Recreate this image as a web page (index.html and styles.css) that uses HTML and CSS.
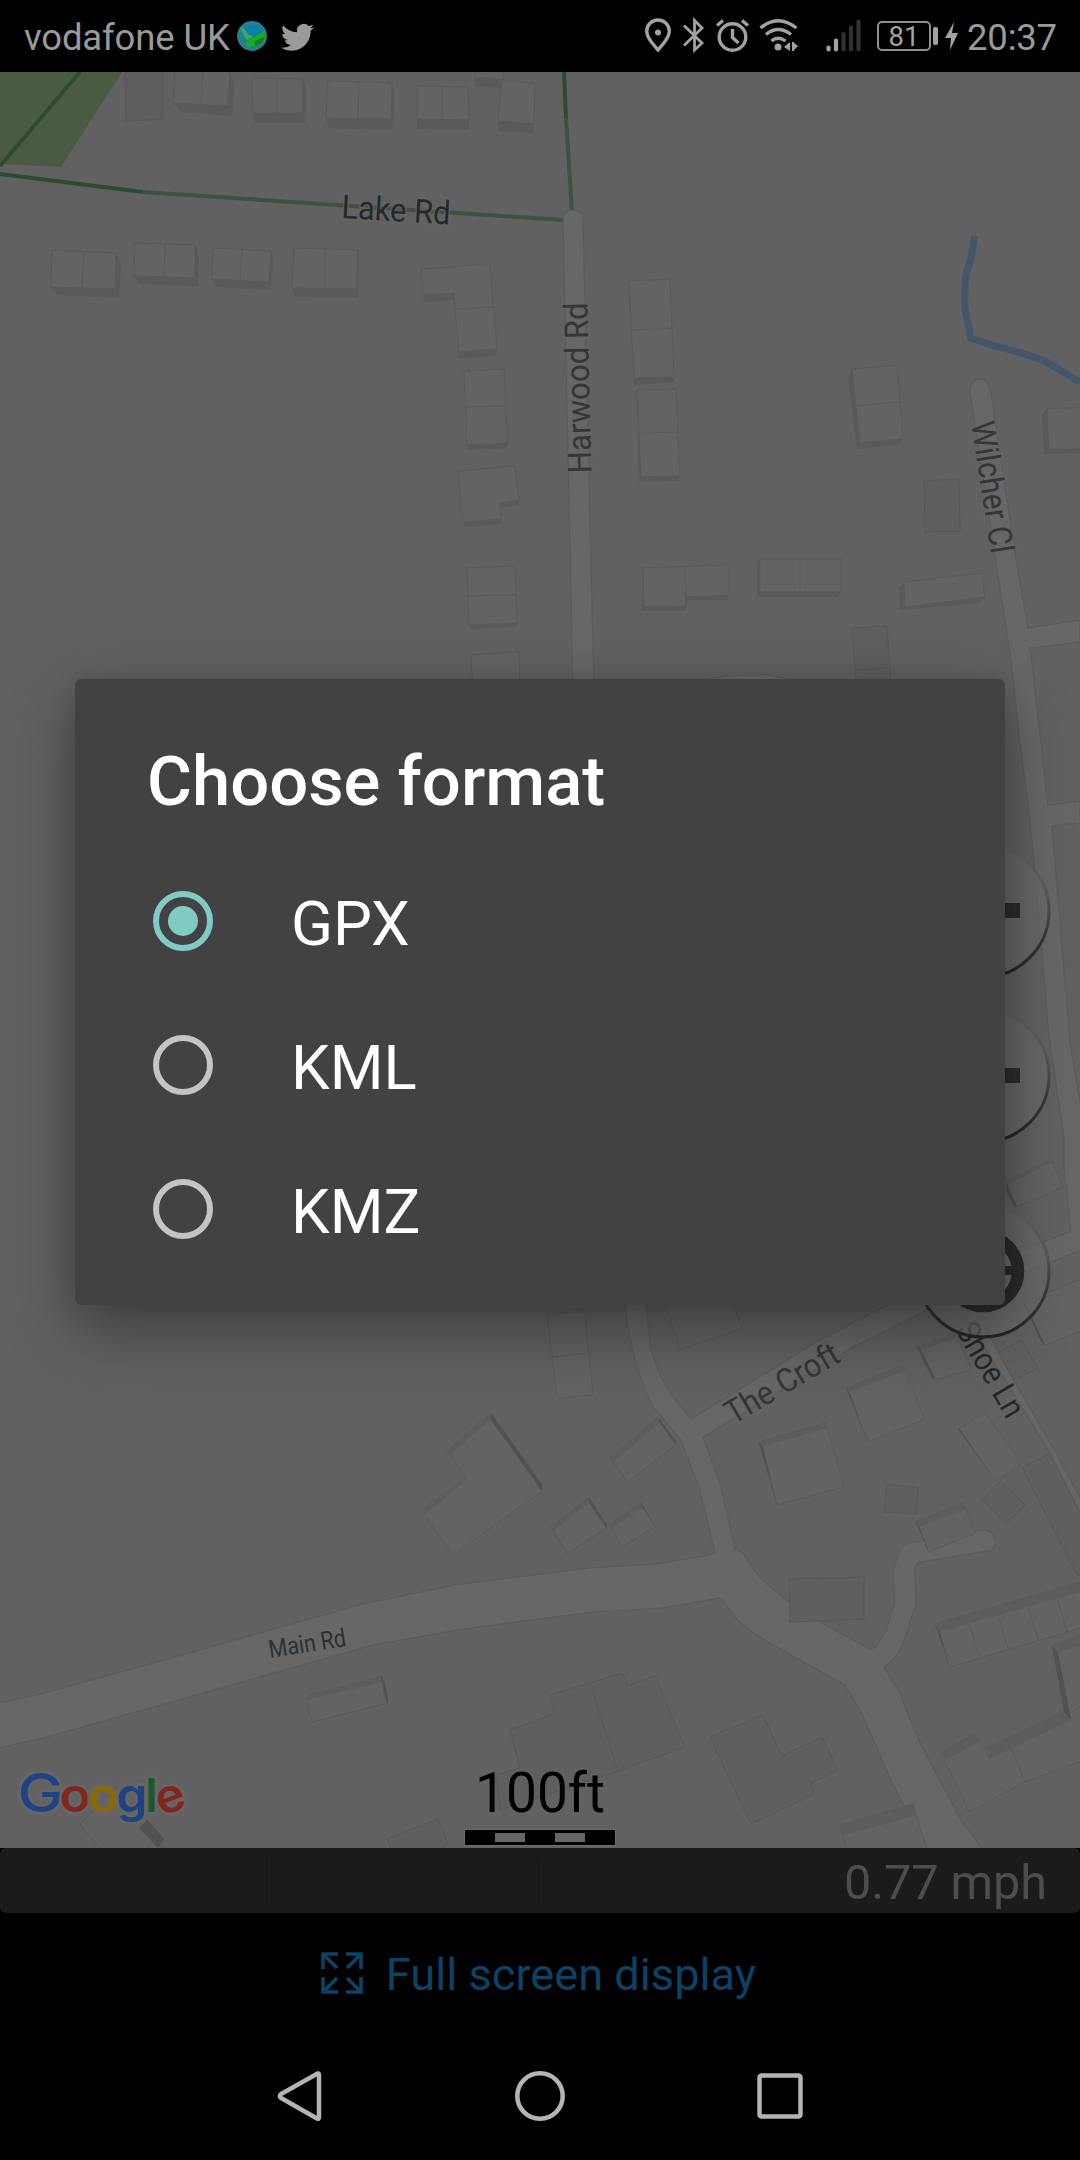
FILE: index.html
```html
<!DOCTYPE html>
<html lang="en">
<head>
<meta charset="utf-8">
<title>Choose format</title>
<link rel="stylesheet" href="styles.css">
</head>
<body>
<div class="phone">
  <header class="status">
    <span class="carrier">vodafone UK</span>
    <svg class="globe" width="32" height="32" viewBox="0 0 32 32">
      <circle cx="16" cy="16" r="15" fill="#23808c"/>
      <path d="M9 6L24 5L28 10.700L18 17.500L12 14Z" fill="#0b80a8"/>
      <path d="M4 8L7 7.300L13 15L17 16L12 21L9 18Z" fill="#3aa56c"/>
      <path d="M12 19L18.700 17.300L28 10.700L29.400 17L18.700 26.500L10 26L11 21Z" fill="#1bac1b"/>
      <path d="M19 21L29 16.500L26 23L18.700 26.500Z" fill="#14801f"/>
    </svg>
    <svg class="bird" width="33" height="30" viewBox="0 1.5 24 20.5"><path fill="#9a9a9a" d="M23.95 4.57a10 10 0 01-2.82.77 4.96 4.96 0 002.16-2.72c-.95.55-2 .96-3.13 1.18a4.92 4.92 0 00-8.38 4.48C7.69 8.1 4.07 6.13 1.64 3.16a4.92 4.92 0 001.52 6.57 4.9 4.9 0 01-2.23-.61v.06a4.92 4.92 0 003.95 4.83 5 5 0 01-2.21.08 4.94 4.94 0 004.6 3.42A9.87 9.87 0 010 19.54a14 14 0 007.55 2.21c9.05 0 14-7.5 14-13.98 0-.21 0-.42-.02-.63a9.94 9.94 0 002.46-2.55z"/></svg>
    <div class="indicators">
      <svg width="160" height="40" viewBox="644 17 160 40" fill="none" stroke="#a2a2a2" stroke-width="3.4">
        <path d="M658 51C652 44 646.700 38 646.700 32A11.300 11 0 0 1 669.300 32C669.300 38 664 44 658 51Z"/>
        <circle cx="658" cy="33.500" r="3" fill="#a2a2a2" stroke="none"/>
        <path stroke-width="2.800" d="M684 26.500L702 44L694.500 51V21.500L702 29L684 46.500"/>
        <circle cx="732.500" cy="38" r="13.300"/>
        <path d="M732.500 30V38.500L738.500 44M717 26.500L723 21.500M748 26.500L742 21.500"/>
        <path d="M760.500 29Q778 14.500 796.500 29M766 35.500Q778 25.500 791 35.500M771.500 42Q778 36.500 785.500 42"/>
        <circle cx="778" cy="48" r="3.500" fill="#a2a2a2" stroke="none"/>
        <path fill="#a2a2a2" stroke="none" d="M784 48L790 43V52ZM798 47L793 52V43ZM792 43h2v9h-2z"/>
      </svg>
      <svg class="signal" width="37" height="36" viewBox="825 18 37 36" stroke-width="4.200" stroke-linecap="round">
        <path stroke="#a2a2a2" d="M828.500 47.500V49.500M836 40.500V49.500"/>
        <path stroke="#313131" d="M843.500 34V49.500M851 27.500V49.500M858.500 21.500V49.500"/>
      </svg>
      <span class="battery">81</span>
      <i class="tip"></i>
      <svg class="bolt" width="14" height="28" viewBox="0 0 14 28"><path fill="#a2a2a2" d="M9 0L0 16H6L5 28L13 11H7Z"/></svg>
      <span class="time">20:37</span>
    </div>
  </header>

  <main class="map">
    <svg class="tiles" viewBox="0 72 1080 1776" width="1080" height="1776">
      <defs>
        <linearGradient id="ring" x1="0" y1="0" x2="0" y2="1">
          <stop offset="0" stop-color="#333" stop-opacity="0"/>
          <stop offset=".25" stop-color="#444" stop-opacity=".25"/>
          <stop offset=".65" stop-color="#303030" stop-opacity=".8"/>
          <stop offset="1" stop-color="#242424"/>
        </linearGradient>
      </defs>
      <path fill="#4a5b42" d="M0 72H122L61 167L5 164H0Z"/>
      <g fill="none" stroke="#2c4c31" stroke-width="4">
        <path d="M80 72L0 166M0 174L143 192M564 72L566 118"/>
        <path stroke="#3d523f" d="M143 192L563 220M566 118L572 212"/>
      </g>
      <path class="creek" d="M975 236L971 258L966 275Q964 290 965 309L971 338L995 346Q1022 352 1045 361L1080 382"/>

      <g class="plain">
        <path d="M125 71H163V119L126 121Z"/>
        <path d="M924 481L959 479L960 531L925 532Z"/>
        <path d="M852 628L887 626L891 684H856ZM855 670L890 668"/>
      </g>

      <g class="road">
        <path d="M563 220Q564 210 573 210T583 220L594 690L646 1305L650 1342Q654 1367 670 1393L691 1419L820 1340L884 1307L1071 1231L1064 1168V1137L1049 1037L1034 862L1029 812L1019 735L1011 660L970 393Q969 380 980 379Q989 380 991 392L1016 560L1028 628L1080 620V642L1030 648L1032 662L1048 805L1080 801V823L1052 826L1070 1043L1084 1125V1249L1053 1261L927 1310L853 1347L703 1437L721 1487L735 1549L741 1552Q747 1556 752 1567Q758 1578 790 1603L820 1622L870 1649L876 1647L887 1628L895 1603L893 1573L897 1557Q902 1545 909 1543L983 1530C1000 1532 998 1551 987 1551L920 1562Q914 1564 915 1573L916 1603L905 1638Q900 1655 892 1660L884 1667L900 1693Q914 1733 929 1760L959 1817L983 1850H927L891 1780L862 1714L845 1685L766 1641Q738 1624 733 1613L720 1598L661 1608L592 1612L463 1629L373 1645L47 1737L-2 1748V1703L41 1694L157 1662L359 1605L454 1585L590 1568L657 1564L704 1556L715 1553L700 1490L681 1440L653 1407Q632 1365 625 1305L573 690Z"/>
        <path d="M960 1308L1005 1380L1050 1453L1084 1522V1506L1056 1453L1009 1372L975 1308Z"/>
        <path d="M690 682L728 676L770 675L800 682Z"/>
      </g>

      <g class="wall">
        <path d="M173 103L228 106L230 72L234 85L232 116L181 112Z"/>
        <path d="M253 113H303V79L306 86L305 123H255Z"/>
        <path d="M326 118L391 119L392 83L394 90L393 130L329 128Z"/>
        <path d="M417 119L469 120V130L417 129ZM475 72H501V88L475 86Z"/>
        <path d="M498 121L534 124L533 133L498 131Z"/>
        <path d="M51 287L115 289L116 253L121 264L119 298L57 295Z"/>
        <path d="M134 276L195 278V245L199 257L198 286L139 284Z"/>
        <path d="M212 279L269 282L271 251L273 259L271 290L216 287Z"/>
        <path d="M292 288L356 289L358 250L359 263L358 298L296 297Z"/>
        <path d="M423 295L454 293V300L424 302ZM459 352L497 349L496 356L459 358Z"/>
        <path d="M467 445L507 443V448L468 450ZM463 522L501 519L502 524L464 527ZM500 503L519 500V505L500 508Z"/>
        <path d="M469 625L517 623V627L470 629Z"/>
        <path d="M634 378L674 377V382L634 385L629 282L631 283ZM641 477L680 476L679 479L678 481L639 482L637 392Z"/>
        <path d="M852 369L848 378L857 449L900 444L903 439L860 443Z"/>
        <path d="M643 568L642 611L685 611L688 600L727 600L729 595L686 597V606H644Z"/>
        <path d="M760 559L757 565V597H837L841 592H760Z"/>
        <path d="M904 582L899 587L900 610L980 603L985 597L905 607Z"/>
        <path d="M1047 409L1042 415L1044 454L1080 453V449H1049Z"/>
      </g>
      <g class="roof">
        <path d="M175 71H230L228 106L173 103ZM203 72L201 104"/>
        <path d="M252 78L303 79V113H253ZM277 78V113"/>
        <path d="M328 81L392 83L391 119L326 118ZM359 82L358 119"/>
        <path d="M417 86L468 87L469 120L417 119ZM442 87V120"/>
        <path d="M475 71H503V80L475 77ZM502 80L535 83L534 124L498 121Z"/>
        <path d="M52 250L116 253L115 289L51 287ZM84 252L82 288"/>
        <path d="M135 243L195 245V278L134 276ZM165 244L164 277"/>
        <path d="M213 248L271 251L269 282L212 279ZM242 250L240 281"/>
        <path d="M294 248L358 250L356 289L292 288ZM325 249V288"/>
        <path d="M421 269L490 264L493 307L455 309L454 293L423 295Z"/>
        <path d="M455 309L494 307L497 349L459 352Z"/>
        <path d="M464 371L504 369L507 443L467 445ZM466 407L506 406"/>
        <path d="M458 471L515 466L519 500L500 503L501 519L463 522Z"/>
        <path d="M467 568L515 566L517 623L469 625ZM468 596L516 595"/>
        <path d="M471 655L519 652L520 690H473Z"/>
        <path d="M629 281L670 279L674 377L634 378ZM631 330L672 328"/>
        <path d="M637 390L676 389L680 476L641 477ZM638 433L678 432"/>
        <path d="M852 369L897 365L903 439L860 443ZM856 406L900 402"/>
        <path d="M643 568L729 565V595L686 597V606L644 607ZM685 566L686 597"/>
        <path d="M760 559H841V592H760ZM800 559V592"/>
        <path d="M904 582L982 573L985 597L905 607Z"/>
        <path d="M1047 409L1084 407V449H1049Z"/>
      </g>

      <g class="plain low">
        <path d="M789 1579L864 1577V1619L790 1622Z"/>
        <path d="M887 1485L918 1487L917 1514L884 1512Z"/>
        <path d="M982 1499L1000 1481L1025 1505L1006 1523Z"/>
        <path d="M998 1353L1021 1340L1038 1368L1015 1380Z"/>
        <path d="M1022 1467L1050 1454L1084 1520V1575H1077Z"/>
        <path d="M550 1695L622 1673L628 1686L655 1676L685 1747L618 1771L500 1810L496 1775L520 1768L510 1730L554 1714ZM590 1683L618 1771"/>
        <path d="M710 1737L763 1715L782 1756L822 1737L838 1770L811 1783L814 1794L751 1824Z"/>
        <path d="M387 1839L438 1819L448 1844L438 1850H392Z"/>
      </g>
      <g class="slab">
        <path d="M547 1312L584 1308L593 1395L557 1398ZM552 1357L588 1353"/>
        <path d="M667 1308L672 1300H732L742 1329L680 1349Z"/>
        <path d="M491 1413L542 1491L453 1555L421 1511L466 1477L447 1451Z"/>
        <path d="M610 1458L658 1417L676 1445L628 1482Z"/>
        <path d="M551 1527L589 1497L607 1528L567 1553Z"/>
        <path d="M609 1525L641 1503L655 1527L622 1547Z"/>
        <path d="M759 1442L826 1423L844 1487L777 1505Z"/>
        <path d="M846 1388L902 1366L925 1419L868 1442Z"/>
        <path d="M917 1347L956 1333L971 1370L933 1380Z"/>
        <path d="M958 1429L985 1413L1022 1463L996 1481Z"/>
        <path d="M916 1522L963 1503L976 1533L929 1552Z"/>
        <path d="M935 1624L1084 1581V1627L950 1667ZM969 1623L979 1657M998 1615L1008 1648M1028 1607L1038 1640M1057 1597L1067 1632"/>
        <path d="M1052 1646L1084 1634V1714L1071 1720Z"/>
        <path d="M941 1753L976 1733L989 1759L1084 1705V1760L1025 1782L969 1812ZM1011 1748L1025 1782"/>
        <path d="M840 1825L913 1804L927 1850H847Z"/>
        <path d="M306 1700L382 1676L388 1703L312 1722Z"/>
        <path d="M80 1824L116 1787L164 1839L160 1850H101Z"/>
        <path d="M1006 1181L1052 1161L1063 1187L1017 1207Z"/>
        <path d="M1023 1302L1084 1278V1330L1045 1345Z"/>
      </g>
      <g fill="#5c5c5c">
        <path d="M547 1312L584 1308V1312L548 1316ZM447 1451L491 1413V1419L449 1456ZM421 1511L466 1477L464 1482L423 1516ZM610 1458L658 1417L659 1423L612 1463Z"/>
        <path d="M551 1527L589 1497V1503L553 1531ZM609 1525L641 1503L642 1507L611 1529ZM759 1442L826 1423L828 1428L761 1446ZM846 1388L902 1366L907 1370L848 1392Z"/>
        <path d="M917 1347L956 1333L958 1337L919 1351ZM916 1522L963 1503L967 1508L919 1527ZM935 1624L1080 1582V1592L938 1632ZM1052 1646L1080 1635V1646L1058 1652Z"/>
        <path d="M941 1753L976 1733L980 1741L944 1761ZM987 1747L1064 1711L1071 1720L989 1759ZM840 1825L913 1804L917 1815L844 1835ZM306 1700L310 1694L383 1676V1682Z"/>
        <path d="M1006 1181L1048 1160L1052 1162L1008 1185Z"/>
      </g>
      <g fill="#515151">
        <path d="M491 1413L542 1484V1491L491 1420ZM658 1417L676 1441V1445L659 1422ZM589 1497L607 1525V1529L589 1503ZM641 1502L655 1527L642 1507Z"/>
        <path d="M759 1442L777 1505L763 1446ZM846 1388L868 1442L850 1393ZM917 1347L919 1346L935 1377L933 1380ZM958 1429L996 1481L960 1429ZM916 1522L929 1552L920 1528Z"/>
        <path d="M935 1624L950 1667L940 1632ZM1052 1646L1058 1652L1071 1720L1064 1712ZM382 1676L388 1698V1703L382 1682ZM139 1828L147 1820L164 1839L158 1848Z"/>
        <path d="M1006 1181L1017 1207H1014L1006 1190ZM1023 1302L1027 1306L1045 1345L1041 1342ZM381 1676L385 1683L388 1704L384 1695Z"/>
      </g>

      <g class="label">
        <text class="dark" transform="translate(341 218) rotate(3.400)" textLength="109" lengthAdjust="spacingAndGlyphs">Lake Rd</text>
        <text transform="translate(591.500 473) rotate(-91.400)" textLength="171" lengthAdjust="spacingAndGlyphs">Harwood Rd</text>
        <text transform="translate(971 423) rotate(81.300)" textLength="133" lengthAdjust="spacingAndGlyphs">Wilcher Cl</text>
        <text transform="translate(733 1425) rotate(-30.500)" textLength="127" lengthAdjust="spacingAndGlyphs">The Croft</text>
        <text class="dark" transform="translate(955 1330) rotate(60)" textLength="104" lengthAdjust="spacingAndGlyphs">Shoe Ln</text>
        <text class="main" transform="translate(270 1658) rotate(-9)" textLength="78" lengthAdjust="spacingAndGlyphs">Main Rd</text>
      </g>

      <g stroke="url(#ring)" stroke-width="3" fill="#686868" fill-opacity=".65">
        <circle cx="983" cy="911" r="66"/>
        <circle cx="983" cy="1076" r="66"/>
        <circle cx="983" cy="1271" r="66"/>
      </g>
      <path fill="#2c2c2c" d="M946 903H1020V918H946ZM946 1068H1020V1083H946Z"/>
      <circle cx="983" cy="1271" r="35" fill="none" stroke="#2a2a2a" stroke-width="12.500"/>
      <path stroke="#2a2a2a" stroke-width="9" d="M950 1270.500H1016M983 1238V1304"/>

      <g class="google">
        <text class="cap" x="17.600" y="1812" fill="#1f4280" textLength="46" lengthAdjust="spacingAndGlyphs">G</text>
        <text x="59.500" y="1812" fill="#82251d" textLength="31" lengthAdjust="spacingAndGlyphs">o</text>
        <text x="88" y="1812" fill="#8a6a05" textLength="31" lengthAdjust="spacingAndGlyphs">o</text>
        <text x="116.500" y="1812" fill="#1f4280" textLength="31" lengthAdjust="spacingAndGlyphs">g</text>
        <text x="145.200" y="1812" fill="#1b592b">l</text>
        <text x="156" y="1812" fill="#82251d" textLength="29" lengthAdjust="spacingAndGlyphs" transform="rotate(-20 170.500 1799)">e</text>
      </g>
      <text class="scale" x="540" y="1812" textLength="130" lengthAdjust="spacingAndGlyphs">100ft</text>
      <path stroke="#6d6d6d" d="M464.500 1829.500H615.500V1845.500H464.500Z"/>
      <path fill="#666" d="M495 1833H525V1842H495ZM555 1833H585V1842H555Z"/>
    </svg>
  </main>

  <div class="readouts"><span></span><span></span><span></span><span class="speed">0.77 mph</span></div>

  <div class="fullscreen">
    <svg width="42" height="42" viewBox="0 0 42 42" fill="none" stroke="#0b4266" stroke-width="3.600">
      <path d="M2 17V2H17M2 2L16 16M25 2H40V17M40 2L26 16M2 25V40H17M2 40L16 26M25 40H40V25M40 40L26 26"/>
    </svg>
    <span>Full screen display</span>
  </div>

  <nav class="keys">
    <svg width="50" height="54" viewBox="275 2069 50 54"><path d="M317.500 2073.500Q319 2073 319 2075V2117Q319 2119.500 317 2118.500L281 2098Q279 2096 281 2094Z"/></svg>
    <svg width="54" height="54" viewBox="0 0 54 54"><circle cx="27" cy="27" r="22.700"/></svg>
    <svg width="50" height="50" viewBox="0 0 50 50"><rect x="4.500" y="4.500" width="41" height="41" rx="2"/></svg>
  </nav>

  <section class="dialog">
    <h1>Choose format</h1>
    <label class="option on"><i></i><span>GPX</span></label>
    <label class="option"><i></i><span>KML</span></label>
    <label class="option"><i></i><span>KMZ</span></label>
  </section>
</div>
</body>
</html>
```
FILE: styles.css
```css
* { box-sizing: border-box; }
body { margin: 0; background: #000; font-family: Roboto, "Liberation Sans", sans-serif; }
.phone { position: relative; width: 1080px; height: 2160px; display: flex; flex-direction: column; background: #000; overflow: hidden; }

.status { height: 72px; display: flex; align-items: center; padding: 0 25px 0 24px; color: #9a9a9a; font-size: 36.5px; flex: none; }
.carrier { padding-top: 3px; width: 206px; white-space: nowrap; letter-spacing: -.15px; }
.globe { margin-left: 6px; }
.bird { margin-left: 13px; margin-top: 2px; }
.indicators { margin-left: auto; display: flex; align-items: center; }
.signal { margin-left: 21px; }
.battery { margin-left: 15px; width: 54px; height: 30px; border: 2px solid #8e8e8e; border-radius: 5px; font-size: 27.5px; line-height: 27px; text-align: center; color: #a2a2a2; }
.tip { width: 5px; height: 18px; margin-left: 2px; border-radius: 2px; background: #a2a2a2; }
.bolt { margin-left: 7px; }
.time { margin-left: 8px; padding-top: 3px; width: 88px; white-space: nowrap; letter-spacing: -.2px; }

.map { height: 1776px; background: #616161; flex: none; }
.tiles { display: block; }
.creek { fill: none; stroke: #435768; stroke-width: 7; }
.road path { fill: #676767; stroke: #5b5b5b; stroke-width: 1.2; }
.plain path { fill: #5e5e5e; stroke: #575757; }
.low path { fill: #5f5f5f; }
.wall path { fill: #595959; }
.roof path { fill: #636363; stroke: #595959; }
.slab path { fill: #636363; stroke: #5a5a5a; }
.label text { font-size: 33px; fill: #343637; stroke: #666; stroke-width: 3px; paint-order: stroke; stroke-opacity: .7; }
.label .dark { fill: #25292c; }
.label .main { font-size: 25px; fill: #2c3033; stroke: none; }
.google text { font-family: Inter, sans-serif; font-size: 47px; font-weight: 600; stroke: #686868; stroke-width: 6px; stroke-opacity: .6; paint-order: stroke; }
.google .cap { font-size: 53px; font-weight: 500; }
.scale { font-size: 55.5px; text-anchor: middle; fill: #000; }

.readouts { height: 65px; display: grid; grid-template-columns: 268px 271px 270px 1fr; background: #1b1b1b; border-radius: 6px; flex: none; }
.readouts span { border-right: 2px solid #181818; margin: 10px 0; }
.readouts .speed { margin: 0; border: 0; color: #4d4d4d; font-size: 48.5px; line-height: 69px; text-align: right; padding-right: 33px; white-space: nowrap; }

.fullscreen { height: 119px; display: flex; justify-content: center; align-items: center; gap: 23px; color: #0b4266; font-size: 45.2px; padding-right: 3px; flex: none; }
.fullscreen span { padding-top: 4px; }

.keys { height: 128px; display: flex; justify-content: center; align-items: center; gap: 188px; }
.keys svg { fill: none; stroke: #b4b4b4; stroke-width: 4.5; }

.dialog { position: absolute; left: 75px; top: 679px; width: 930px; height: 626px; padding: 65px 72px 0; border-radius: 6px; background: #424242; color: #fff; box-shadow: 0 26px 66px rgba(0,0,0,.36), 0 0 24px rgba(0,0,0,.1); }
.dialog h1 { margin: 0; height: 105px; line-height: 76px; font-size: 68.8px; font-weight: 500; white-space: nowrap; }
.option { height: 144px; display: flex; align-items: center; gap: 78px; padding-left: 6px; font-size: 61.7px; }
.option i { width: 60px; height: 60px; border: 6px solid #c4c4c4; border-radius: 50%; display: flex; align-items: center; justify-content: center; }
.option.on i { border-color: #80cbc4; }
.option.on i::after { content: ""; width: 30px; height: 30px; border-radius: 50%; background: #80cbc4; }
.option span { padding-top: 6px; }
```
